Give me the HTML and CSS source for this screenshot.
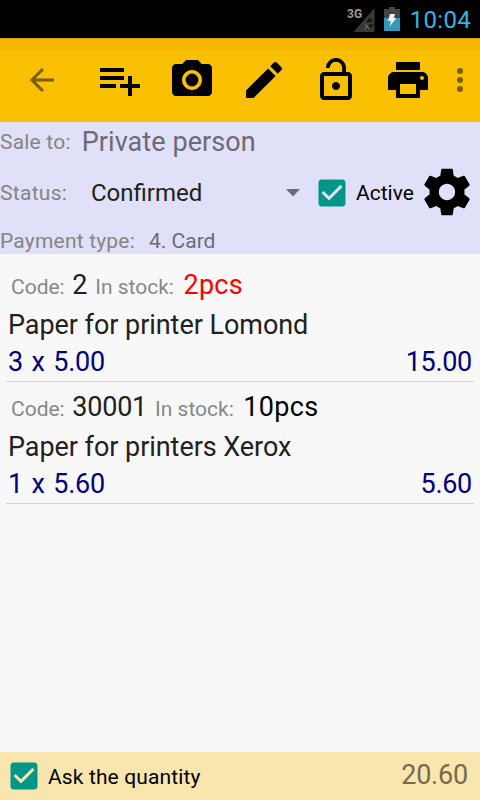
FILE: index.html
```html
<!DOCTYPE html>
<html lang="en">
<head>
<meta charset="utf-8">
<title>Sale</title>
<link rel="stylesheet" href="styles.css">
</head>
<body>
<div class="statusbar">
  <svg class="signal" viewBox="0 0 28 26" width="28" height="26">
    <path d="M27.500 2v24H6.500z" fill="#383838"/>
    <path d="M19 16l3.500-4.500 3.500 4.500z" fill="#151515"/>
    <path d="M18 18l4.500 5M22 18l-4 5" stroke="#777" stroke-width="1"/>
    <path d="M20.500 18.500h6l-3 4z" fill="#151515"/>
    <text x="0" y="12" class="net">3G</text>
  </svg>
  <svg class="battery" viewBox="0 0 16 24" width="16" height="24">
    <path d="M5 0h6v2h5v9H0V2h5z" fill="#444"/>
    <path d="M0 11h16v13H0z" fill="#3398bd"/>
    <path d="M6 7h5l-1 4h2.500l-7 8.500 1.500-5.500H4z" fill="#f4f4f4"/>
  </svg>
  <span class="clock">10:04</span>
</div>
<header class="toolbar">
  <svg class="back" viewBox="0 0 24 24" width="36" height="36"><path d="M20 12H5M12.600 4.700L5.300 12l7.300 7.300" fill="none" stroke="#7a5d00" stroke-width="2"/></svg>
  <nav class="actions">
    <svg viewBox="0 0 24 24" width="48" height="48"><path d="M14 10H2v2h12v-2zm0-4H2v2h12V6zm4 8v-4h-2v4h-4v2h4v4h2v-4h4v-2h-4zM2 16h8v-2H2v2z"/></svg>
    <svg viewBox="0 0 24 24" width="48" height="48"><circle cx="12" cy="12" r="3.200"/><path d="M9 2L7.170 4H4c-1.100 0-2 .9-2 2v12c0 1.100.9 2 2 2h16c1.100 0 2-.9 2-2V6c0-1.100-.9-2-2-2h-3.170L15 2H9zm3 15c-2.760 0-5-2.240-5-5s2.240-5 5-5 5 2.240 5 5-2.240 5-5 5z"/></svg>
    <svg viewBox="0 0 24 24" width="48" height="48"><path d="M3 17.250V21h3.750L17.810 9.940l-3.750-3.750L3 17.250zM20.710 7.040c.39-.39.39-1.020 0-1.410l-2.340-2.340c-.39-.39-1.020-.39-1.410 0l-1.830 1.830 3.750 3.750 1.830-1.830z"/></svg>
    <svg viewBox="0 0 24 24" width="48" height="48"><path d="M12 17c1.100 0 2-.9 2-2s-.9-2-2-2-2 .9-2 2 .9 2 2 2zm6-9h-1V6c0-2.760-2.240-5-5-5S7 3.240 7 6h1.900c0-1.710 1.390-3.100 3.100-3.100s3.100 1.390 3.100 3.100v2H6c-1.100 0-2 .9-2 2v10c0 1.100.9 2 2 2h12c1.100 0 2-.9 2-2V10c0-1.100-.9-2-2-2zm0 12H6V10h12v10z"/></svg>
    <svg viewBox="0 0 24 24" width="48" height="48"><path d="M19 8H5c-1.660 0-3 1.340-3 3v6h4v4h12v-4h4v-6c0-1.660-1.340-3-3-3zm-3 11H8v-5h8v5zm3-7c-.55 0-1-.45-1-1s.45-1 1-1 1 .45 1 1-.45 1-1 1zm-1-9H6v4h12V3z"/></svg>
  </nav>
  <svg class="more" viewBox="0 0 24 24" width="36" height="36"><g fill="#7a5d00"><circle cx="12" cy="6" r="2"/><circle cx="12" cy="12" r="2"/><circle cx="12" cy="18" r="2"/></g></svg>
</header>
<section class="details">
  <div class="row sale"><span class="label">Sale to:</span><span class="customer">Private person</span></div>
  <div class="row status">
    <span class="label">Status:</span>
    <span class="select"><span class="state">Confirmed</span><svg viewBox="0 0 14 8" width="14" height="8"><path d="M0 0h14L7 7.500z" fill="#6b6a76"/></svg></span>
    <svg class="check" viewBox="0 0 24 24" width="36" height="36"><path d="M19 3H5c-1.110 0-2 .9-2 2v14c0 1.100.89 2 2 2h14c1.110 0 2-.9 2-2V5c0-1.100-.89-2-2-2zm-9 14l-5-5 1.410-1.410L10 14.170l7.590-7.590L19 8l-9 9z"/></svg>
    <span class="active">Active</span>
    <svg class="gear" viewBox="0 0 24 24" width="56" height="56"><path d="M19.430 12.980c.04-.32.070-.64.070-.98s-.03-.66-.07-.98l2.110-1.650c.19-.15.24-.42.12-.64l-2-3.460c-.12-.22-.39-.3-.61-.22l-2.490 1c-.52-.4-1.080-.73-1.690-.98l-.38-2.650C14.460 2.180 14.250 2 14 2h-4c-.25 0-.46.18-.49.42l-.38 2.650c-.61.25-1.170.59-1.690.98l-2.490-1c-.23-.09-.49 0-.61.22l-2 3.460c-.13.22-.07.49.12.64l2.110 1.650c-.04.32-.07.65-.07.98s.03.66.07.98l-2.110 1.650c-.19.15-.24.42-.12.64l2 3.460c.12.22.39.3.61.22l2.490-1c.52.4 1.080.73 1.690.98l.38 2.650c.03.24.24.42.49.42h4c.25 0 .46-.18.49-.42l.38-2.650c.61-.25 1.170-.59 1.690-.98l2.490 1c.23.09.49 0 .61-.22l2-3.460c.12-.22.07-.49-.12-.64l-2.110-1.650zM12 15.500c-1.930 0-3.500-1.570-3.500-3.500s1.570-3.500 3.500-3.500 3.500 1.570 3.500 3.500-1.570 3.500-3.500 3.500z"/></svg>
  </div>
  <div class="row payment"><span class="label">Payment type:</span><span class="method">4. Card</span></div>
</section>
<main class="items">
  <article class="item">
    <div class="meta"><span class="tag">Code:</span><span class="code">2</span><span class="tag">In stock:</span><span class="stock low">2pcs</span></div>
    <div class="name">Paper for printer Lomond</div>
    <div class="price"><span class="qty">3 x 5.00</span><span class="sum">15.00</span></div>
  </article>
  <article class="item">
    <div class="meta"><span class="tag">Code:</span><span class="code">30001</span><span class="tag">In stock:</span><span class="stock">10pcs</span></div>
    <div class="name">Paper for printers Xerox</div>
    <div class="price"><span class="qty">1 x 5.60</span><span class="sum">5.60</span></div>
  </article>
</main>
<footer class="footer">
  <svg class="check" viewBox="0 0 24 24" width="36" height="36"><path d="M19 3H5c-1.110 0-2 .9-2 2v14c0 1.100.89 2 2 2h14c1.110 0 2-.9 2-2V5c0-1.100-.89-2-2-2zm-9 14l-5-5 1.410-1.410L10 14.170l7.590-7.590L19 8l-9 9z"/></svg>
  <span class="ask">Ask the quantity</span>
  <span class="total">20.60</span>
</footer>
</body>
</html>
```
FILE: styles.css
```css
* { box-sizing: border-box; }
body {
  margin: 0;
  width: 480px;
  height: 800px;
  display: flex;
  flex-direction: column;
  overflow: hidden;
  background: #f8f8f8;
  color: #212121;
  font: 27px Roboto, sans-serif;
  white-space: nowrap;
}
svg { display: block; flex: none; }

.statusbar {
  height: 38px;
  display: flex;
  align-items: center;
  justify-content: flex-end;
  padding-right: 9px;
  background: #000;
}
.signal { margin: -1px 9px 0 0; }
.net { font: bold 12px Roboto, sans-serif; fill: #999; }
.battery { margin: -1px 10px 0 0; }
.clock { font-size: 24px; line-height: 38px; color: #33b5e5; font-weight: 370; letter-spacing: 0.3px; padding-top: 1px; }

.toolbar {
  height: 84px;
  display: flex;
  align-items: center;
  padding: 0 2px 0 24px;
  background: linear-gradient(#d79b05 0 1px, #f8b500 1px 12px, #f9c002 12px);
}
.actions { display: flex; gap: 24px; margin: 0 10px 0 36px; }

.details { height: 132px; background: #e0e0f8; }
.row { display: flex; align-items: center; }
.label, .tag, .active, .method, .ask { font-size: 21px; }
.label { color: #858585; letter-spacing: 0.2px; }
.sale { height: 40px; }
.customer { margin-left: 11px; color: #6b6a76; letter-spacing: 0.07px; }
.status { height: 61px; }
.status .label { width: 91px; letter-spacing: 0.3px; }
.select { width: 223px; display: flex; align-items: center; justify-content: space-between; padding-right: 14px; font-size: 24px; }
.check { fill: #009688; }
.active { width: 63px; margin-left: 6px; color: #000; }
.gear { margin-top: -1px; }
.payment { height: 31px; padding-top: 5px; }
.method { margin-left: 14px; color: #6b6a76; }

.items { flex: 1; padding: 6px 6px 0; }
.item { height: 122px; padding-top: 6px; border-bottom: 1px solid #d5d5d5; }
.meta { display: flex; align-items: baseline; height: 38px; line-height: 38px; padding-left: 5px; }
.tag { color: #888; }
.code { margin: 0 8px 0 7.500px; letter-spacing: -0.2px; }
.stock { margin-left: 9.500px; color: #000; letter-spacing: 0.3px; }
.stock.low { color: #f00; }
.name { line-height: 42px; padding-left: 2px; letter-spacing: -0.05px; }
.price { display: flex; justify-content: space-between; line-height: 32px; padding: 0 2px; color: #000080; }
.qty { word-spacing: 2px; letter-spacing: -0.2px; }
.sum { letter-spacing: -0.3px; }

.footer { height: 48px; display: flex; align-items: center; padding: 0 12px 0 6px; background: #f9e6ae; }
.ask { margin: 1px 0 0 6px; color: #000; letter-spacing: 0.13px; }
.total { margin-left: auto; color: #746a50; line-height: 48px; margin-top: -2px; letter-spacing: -0.2px; }
```
